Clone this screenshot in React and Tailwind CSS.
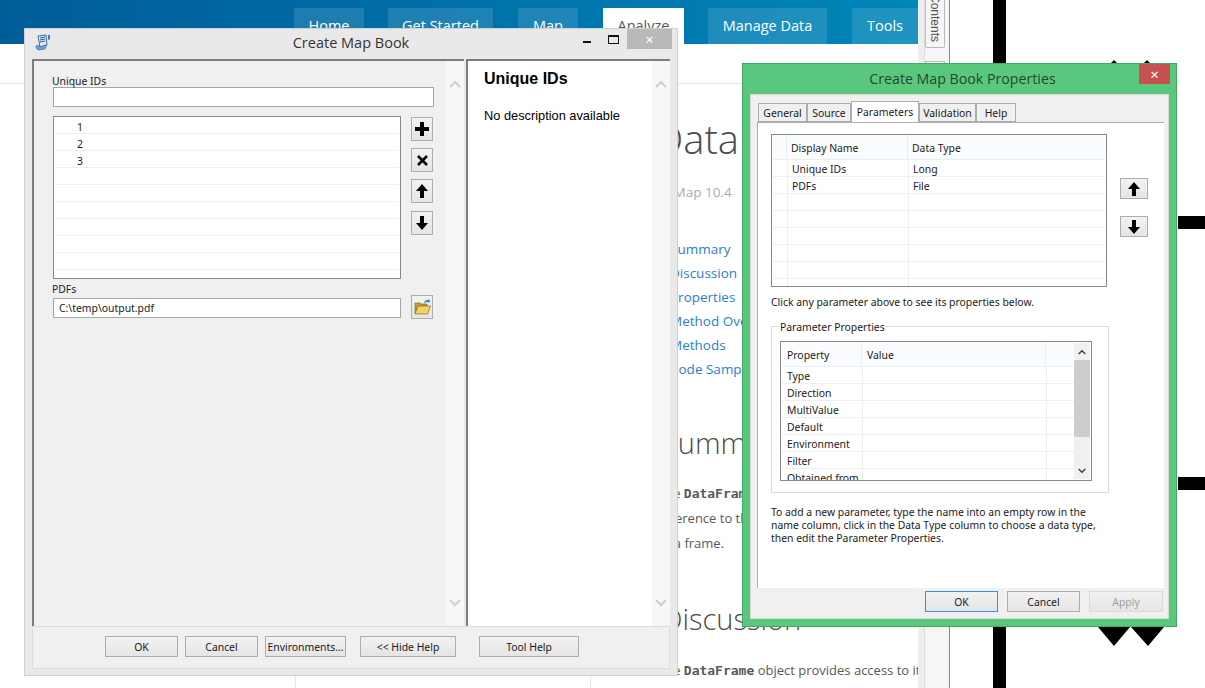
import React from "react";

const NAV = [
  { label: "Home", w: "w-[70px]", ml: "ml-[294px]" },
  { label: "Get Started", w: "w-[105px]", ml: "ml-[24px]" },
  { label: "Map", w: "w-[60px]", ml: "ml-[25px]" },
  { label: "Analyze", w: "w-[81px]", ml: "ml-[25px]", active: true },
  { label: "Manage Data", w: "w-[119px]", ml: "ml-[24px]" },
  { label: "Tools", w: "w-[66px]", ml: "ml-[25px]" },
];

const LINKS = ["Summary", "Discussion", "Properties", "Method Overview", "Methods", "Code Sample"];

const Chevron = ({ down, className = "" }) => (
  <svg width="12" height="8" viewBox="0 0 12 8" className={className}>
    <polyline
      points={down ? "1,1 6,6 11,1" : "1,7 6,2 11,7"}
      fill="none"
      stroke="currentColor"
      strokeWidth="2.2"
    />
  </svg>
);

const PlusIcon = () => (
  <svg width="14" height="14" viewBox="0 0 14 14">
    <path d="M5 0h4v5h5v4H9v5H5V9H0V5h5z" fill="#000" />
  </svg>
);

const CrossIcon = () => (
  <svg width="11" height="11" viewBox="0 0 11 11">
    <path d="M1 1l9 9M10 1l-9 9" stroke="#000" strokeWidth="2.6" fill="none" />
  </svg>
);

const UpIcon = () => (
  <svg width="12" height="14" viewBox="0 0 12 14">
    <path d="M6 0l6 7H8v7H4V7H0z" fill="#000" />
  </svg>
);

const DownIcon = () => (
  <svg width="12" height="14" viewBox="0 0 12 14">
    <path d="M4 0h4v7h4l-6 7-6-7h4z" fill="#000" />
  </svg>
);

const FolderIcon = () => (
  <svg width="17" height="16" viewBox="0 0 17 16">
    <path d="M1 4h5l1 1h6v2H4L1 14z" fill="#c9a13b" stroke="#8a6d1f" strokeWidth="0.7" />
    <path d="M4 7h12.5l-3 8H1z" fill="#f2d06b" stroke="#8a6d1f" strokeWidth="0.7" />
    <path d="M10 4c0-2 2-3 4-3V0l2.5 2L14 4V3c-2 0-3 0-4 1z" fill="#2f7fd0" />
  </svg>
);

const ScriptIcon = () => (
  <svg width="16" height="17" viewBox="0 0 16 17">
    <path d="M3 2l8-1 1 10-7 2z" fill="#dfe8f3" stroke="#3b6fa8" strokeWidth="1" />
    <path d="M5 4l5-1M5 6l5-1M5 8l5-1" stroke="#2b5f98" strokeWidth="1" />
    <path d="M1 12c2-1 3 0 4 1l6-2c0 2 0 3-1 4l-6 1c-2 0-3-2-3-4z" fill="#6fa3d8" stroke="#3b6fa8" strokeWidth="0.7" />
    <path d="M13 1h2v4l-2 1z" fill="#2f7fd0" />
  </svg>
);

const IconBtn = ({ children, size = "w-[22px] h-[24px]", className = "" }) => (
  <div className={`${size} flex items-center justify-center border border-[#adadad] bg-gradient-to-b from-[#f2f2f2] to-[#e5e5e5] ${className}`}>
    {children}
  </div>
);

const DlgBtn = ({ children, w, ml = "", className = "border-[#adadad] text-[#1a1a1a]" }) => (
  <div className={`${w} ${ml} h-[21px] flex items-center justify-center pt-[2px] border bg-gradient-to-b from-[#f2f2f2] to-[#e5e5e5] ${className}`}>
    {children}
  </div>
);

const ScrollStrip = ({ className = "" }) => (
  <div className={`w-[18px] shrink-0 bg-[#f7f7f7] flex flex-col items-center justify-between pt-[19px] pb-[19px] text-[#cfcfcf] ${className}`}>
    <Chevron />
    <Chevron down />
  </div>
);

function CreateMapBookWindow() {
  const values = ["1", "2", "3", "", "", "", "", "", ""];
  return (
    <div className="absolute left-[24px] top-[28px] w-[654px] h-[648px] bg-[#e9e9e9] border border-[#cfcfcf] flex flex-col font-['Noto_Sans',sans-serif] text-[10.4px] text-[#1a1a1a]">
      <div className="h-[30px] shrink-0 relative flex items-center justify-center">
        <div className="absolute left-[10px] top-[5px]"><ScriptIcon /></div>
        <span className="text-[14.5px] text-[#333] font-['Open_Sans',sans-serif] -mt-[2px]">Create Map Book</span>
        <div className="absolute left-[558px] top-[12px] w-[8px] h-[2px] bg-[#111]" />
        <div className="absolute left-[583px] top-[6px] w-[11px] h-[9px] border border-[#111] border-t-2" />
        <div className="absolute left-[602px] top-0 w-[45px] h-[20px] bg-[#b9b9b9] flex items-center justify-center text-white text-[15px] leading-none">×</div>
      </div>

      <div className="mx-[7px] flex-1 min-h-0 flex">
        {/* Form pane */}
        <div className="w-[432px] shrink-0 flex bg-[#f0f0f0] border-t-2 border-l-2 border-[#7d7d7d]">
          <div className="flex-1 pl-[19px] pt-[14px]">
            <p className="leading-[12px] -ml-px">Unique IDs</p>
            <div className="w-[381px] h-[20px] bg-white border border-[#a6a6a6]" />
            <div className="flex mt-[9px]">
              <div className="w-[348px] h-[163px] bg-white border border-[#7f8a94] overflow-hidden pl-px pr-px">
                {values.map((v, i) => (
                  <div key={i} className="h-[17px] border-b border-[#eeeeee] pl-[22px] leading-[20px]">{v}</div>
                ))}
              </div>
              <div className="ml-[10px] flex flex-col">
                <IconBtn className="mt-px"><PlusIcon /></IconBtn>
                <IconBtn className="mt-[7px]"><CrossIcon /></IconBtn>
                <IconBtn className="mt-[7px]"><UpIcon /></IconBtn>
                <IconBtn className="mt-[8px]"><DownIcon /></IconBtn>
              </div>
            </div>
            <p className="mt-[3px] leading-[14px] -ml-px">PDFs</p>
            <div className="flex items-center mt-px">
              <div className="w-[348px] h-[20px] bg-white border border-[#a6a6a6] pl-[5px] leading-[18px]">C:\temp\output.pdf</div>
              <IconBtn className="ml-[10px] -mt-[2px]"><FolderIcon /></IconBtn>
            </div>
          </div>
          <ScrollStrip />
        </div>

        {/* Help pane */}
        <div className="ml-[2px] flex-1 flex bg-white border-t-2 border-l-2 border-[#7d7d7d] font-['Liberation_Sans',sans-serif]">
          <div className="flex-1 pl-[16px] pt-[9px] text-black">
            <p className="text-[16px] font-bold leading-[18px]">Unique IDs</p>
            <p className="text-[12.8px] leading-[16px] mt-[20px]">No description available</p>
          </div>
          <ScrollStrip />
        </div>
      </div>

      <div className="mx-[7px] mb-[6px] h-[43px] shrink-0 border border-[#dcdcdc] bg-[#f0f0f0] flex items-start pt-[9px] pl-[72px]">
        <DlgBtn w="w-[73px]">OK</DlgBtn>
        <DlgBtn w="w-[73px]" ml="ml-[7px]">Cancel</DlgBtn>
        <DlgBtn w="w-[81px]" ml="ml-[7px]">Environments...</DlgBtn>
        <DlgBtn w="w-[96px]" ml="ml-[14px]">{"<< Hide Help"}</DlgBtn>
        <DlgBtn w="w-[100px]" ml="ml-[23px]">Tool Help</DlgBtn>
      </div>
    </div>
  );
}

const TABS = [
  { label: "General", w: "w-[49px]" },
  { label: "Source", w: "w-[44px]" },
  { label: "Parameters", w: "w-[68px]", active: true },
  { label: "Validation", w: "w-[57px]" },
  { label: "Help", w: "w-[40px]" },
];

const PROPS = ["Type", "Direction", "MultiValue", "Default", "Environment", "Filter", "Obtained from"];

function PropertiesWindow() {
  const params = [["Unique IDs", "Long"], ["PDFs", "File"], ["", ""], ["", ""], ["", ""], ["", ""], ["", ""], ["", ""]];
  return (
    <div className="absolute left-[742px] top-[63px] w-[435px] h-[564px] bg-[#5ac87c] border border-[#46a866] flex flex-col font-['Noto_Sans',sans-serif] text-[10.4px] text-[#1a1a1a]">
      <div className="h-[30px] shrink-0 relative flex items-center justify-center">
        <span className="text-[14.2px] text-[#1e4a2f] font-['Open_Sans',sans-serif] ml-[6px]">Create Map Book Properties</span>
        <div className="absolute left-[396px] top-0 w-[31px] h-[20px] bg-[#c75050] flex items-center justify-center text-white text-[15px] leading-none">×</div>
      </div>

      <div className="mx-[7px] flex-1 min-h-0 mb-[7px] bg-[#f0f0f0] border border-[#d9d9d9] flex flex-col">
        <div className="h-[27px] shrink-0 flex items-end pl-[7px] relative z-10">
          {TABS.map((t) => (
            <div
              key={t.label}
              className={
                t.active
                  ? `${t.w} h-[21px] bg-white border border-b-0 border-[#adadad] flex items-start justify-center pt-[3px]`
                  : `${t.w} h-[19px] bg-[#f0f0f0] border border-[#adadad] flex items-center justify-center pt-[3px]`
              }
            >
              {t.label}
            </div>
          ))}
        </div>

        <div className="ml-[6px] mr-[4px] h-[466px] shrink-0 bg-white border-t border-l border-[#adadad] pl-[13px] pt-[11px]">
          <div className="flex">
            <div className="w-[336px] h-[153px] border border-[#7f8a94] overflow-hidden px-px">
              <div className="h-[25px] flex items-center bg-[#fbfcfe] border-b border-[#e6eef7]">
                <div className="w-[14px] h-full border-r border-[#e6eef7]" />
                <div className="w-[121px] h-full border-r border-[#e6eef7] pl-[4px] pt-[3px] flex items-center">Display Name</div>
                <div className="pl-[4px] pt-[3px]">Data Type</div>
              </div>
              {params.map((p, i) => (
                <div key={i} className="h-[17px] flex border-b border-[#eeeeee] leading-[18px]">
                  <div className="w-[15px] border-r border-[#eeeeee]" />
                  <div className="w-[121px] border-r border-[#eeeeee] pl-[4px]">{p[0]}</div>
                  <div className="pl-[4px]">{p[1]}</div>
                </div>
              ))}
            </div>
            <div className="ml-[13px] pt-[44px] flex flex-col">
              <IconBtn size="w-[28px] h-[21px]"><UpIcon /></IconBtn>
              <IconBtn size="w-[28px] h-[21px]" className="mt-[17px]"><DownIcon /></IconBtn>
            </div>
          </div>

          <p className="mt-[8px] leading-[14px]">Click any parameter above to see its properties below.</p>

          <div className="relative mt-[17px] w-[338px] h-[167px] border border-[#dcdcdc] pl-[8px] pt-[14px]">
            <span className="absolute left-[7px] -top-[6px] bg-white px-px leading-[13px]">Parameter Properties</span>
            <div className="w-[312px] h-[140px] border border-[#7f8a94] flex overflow-hidden pl-px">
              <div className="flex-1 min-w-0">
                <div className="h-[25px] flex bg-[#fbfcfe] border-b border-[#e6eef7] items-center">
                  <div className="w-[80px] h-full border-r border-[#e6eef7] pl-[5px] pt-[3px] flex items-center">Property</div>
                  <div className="w-[184px] h-full border-r border-[#e6eef7] pl-[5px] pt-[3px] flex items-center">Value</div>
                </div>
                {PROPS.map((p) => (
                  <div key={p} className="h-[17px] flex border-b border-[#eeeeee] leading-[18px]">
                    <div className="w-[81px] border-r border-[#eeeeee] pl-[5px] whitespace-nowrap">{p}</div>
                    <div className="w-[184px] border-r border-[#eeeeee]" />
                  </div>
                ))}
              </div>
              <div className="w-[16px] mr-[1px] my-[1px] shrink-0 bg-[#f0f0f0] flex flex-col items-center text-[#404040]">
                <div className="h-[17px] flex items-center"><Chevron className="w-[8px] h-[6px]" /></div>
                <div className="w-full h-[77px] bg-[#cdcdcd]" />
                <div className="flex-1 flex items-end pb-[5px]"><Chevron down className="w-[8px] h-[6px]" /></div>
              </div>
            </div>
          </div>

          <p className="mt-[13px] leading-[13px] w-[330px]">
            To add a new parameter, type the name into an empty row in the name column, click in the Data Type column to choose a data type, then edit the Parameter Properties.
          </p>
        </div>

        <div className="flex pl-[174px] pt-[3px]">
          <DlgBtn w="w-[73px]" className="border-[#3d8fdc] text-[#1a1a1a]">OK</DlgBtn>
          <DlgBtn w="w-[73px]" ml="ml-[9px]">Cancel</DlgBtn>
          <DlgBtn w="w-[74px]" ml="ml-[9px]" className="border-[#d9d9d9] text-[#a0a0a0]">Apply</DlgBtn>
        </div>
      </div>
    </div>
  );
}

function WebPage() {
  return (
    <div className="h-full flex font-['Open_Sans',sans-serif]">
      <div className="w-[918px] shrink-0 flex flex-col overflow-hidden">
        <div className="h-[44px] shrink-0 flex items-end bg-gradient-to-r from-[#005c99] to-[#0086ba]">
          {NAV.map((n) => (
            <div
              key={n.label}
              className={`${n.w} ${n.ml} shrink-0 h-[36px] flex items-center justify-center text-[14.5px] ${
                n.active ? "bg-white text-[#555]" : "bg-[#ffffff1f] text-white"
              }`}
            >
              {n.label}
            </div>
          ))}
        </div>
        <div className="h-[40px] shrink-0 border-b border-[#e6e6e6]" />
        <div className="flex-1 min-h-0 flex overflow-hidden">
          <div className="w-[295px] shrink-0" />
          <div className="w-[295px] shrink-0 border-l border-[#e6e6e6]" />
          <div className="flex-1 min-w-0 border-l border-[#e6e6e6] pl-[71px] text-[#4c4c4c] whitespace-nowrap">
            <h1 className="mt-[30px] text-[40px] leading-[50px] font-light -ml-[7px]">DataFrame</h1>
            <p className="mt-[18px] text-[13.5px] leading-[20px] text-[#aaa] -ml-[9px]">ArcMap 10.4</p>
            <ul className="mt-[35px] ml-[8px] text-[13.5px] leading-[24px] text-[#2f7ec5]">
              {LINKS.map((l) => (
                <li key={l}>{l}</li>
              ))}
            </ul>
            <h2 className="mt-[42px] text-[29px] leading-[40px] font-light">Summary</h2>
            <p className="mt-[18px] -ml-[4px] text-[13px] leading-[25px] text-[#595959]">
              The <b className="font-['DejaVu_Sans_Mono',monospace]">DataFrame</b> object
            </p>
            <p className="text-[13px] leading-[25px] text-[#595959] -ml-[4px]">reference to the</p>
            <p className="text-[13px] leading-[25px] text-[#595959] -ml-[8px]">data frame.</p>
            <h2 className="mt-[43px] text-[29px] leading-[40px] font-light">Discussion</h2>
            <p className="mt-[19px] -ml-[4px] text-[13px] leading-[25px] text-[#595959]">
              The <b className="font-['DejaVu_Sans_Mono',monospace]">DataFrame</b> object provides access to its
            </p>
          </div>
        </div>
      </div>

      {/* Contents strip */}
      <div className="w-[32px] shrink-0 flex bg-white border-r border-[#888]">
        <div className="w-[7px] bg-[#eeeeee] border-r border-[#dddddd]" />
        <div className="flex-1 bg-[#f6f6f6] relative overflow-hidden">
          <div className="h-[48px] w-[20px] border border-t-0 border-[#bbb] rounded-b-[2px] flex items-end justify-center pb-[5px] bg-[#f6f6f6]">
            <span className="[writing-mode:vertical-rl] text-[12px] leading-[18px] text-[#555] font-['Liberation_Sans',sans-serif]">Contents</span>
          </div>
          <div className="mt-[13px] h-[3px] w-[20px] border border-b-0 border-[#bbb]" />
        </div>
      </div>

      {/* Diagram behind the windows */}
      <div className="flex-1 relative bg-white">
        <div className="absolute left-[43px] top-0 bottom-0 w-[13px] bg-black" />
        <div className="absolute left-[228px] right-0 top-[216px] h-[13px] bg-black" />
        <div className="absolute left-[228px] right-0 top-[477px] h-[13px] bg-black" />
        <svg className="absolute left-[147px] top-[614px]" width="68" height="34" viewBox="0 0 68 34">
          <path d="M1 13h32L17 32zM34 13h33L51 32z" fill="#000" />
        </svg>
        <svg className="absolute left-[160px] top-[59px]" width="44" height="5" viewBox="0 0 44 5">
          <path d="M0 5l4-4 4 4zM33 5l4-4 4 4z" fill="#000" />
        </svg>
      </div>
    </div>
  );
}

export default function App() {
  return (
    <div className="relative w-[1205px] h-[688px] overflow-hidden bg-white">
      <WebPage />
      <CreateMapBookWindow />
      <PropertiesWindow />
    </div>
  );
}
